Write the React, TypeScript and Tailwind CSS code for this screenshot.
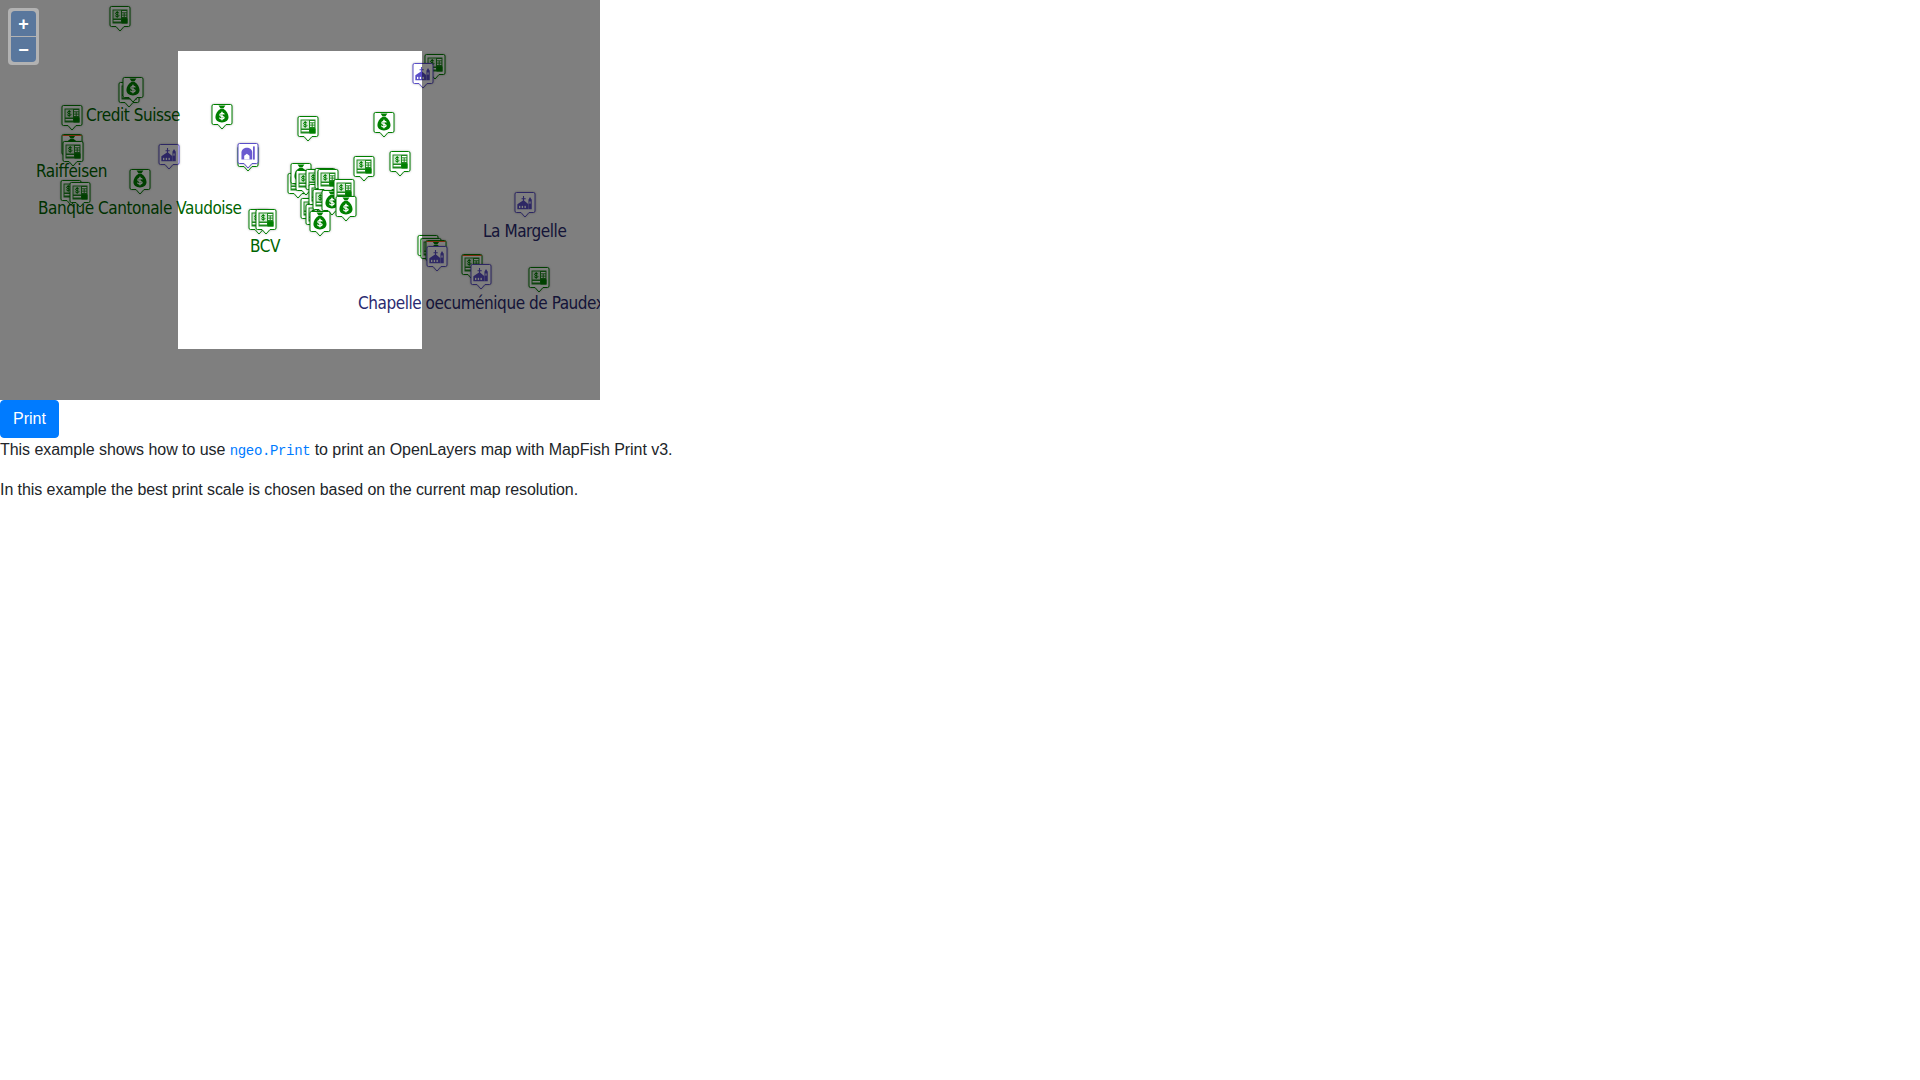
import React from "react";

type Kind = "atm" | "bag" | "church" | "chapel";
type Pin = { k: Kind; x: number; y: number; bar?: boolean };

const GREEN = "#008000";
const VIOLET = "#5a4ec8";

function Dollar({ x, y, s, c }: { x: number; y: number; s: number; c: string }) {
  return (
    <g transform={`translate(${x} ${y}) scale(${s})`} fill="none" stroke={c} strokeWidth={1} strokeLinecap="round">
      <path d="M1.6-1.6C1.2-2.3-1.7-2.4-1.7-.9c0 1.6 3.4.6 3.4 2.1C1.7 2.6-1.3 2.5-1.8 1.6" />
      <path d="M0-3V3" />
    </g>
  );
}

function Icon({ k }: { k: Kind }) {
  if (k === "atm")
    return (
      <g>
        <rect x="3" y="3.5" width="15" height="14" fill="#1f8a1f" />
        <rect x="4" y="4.5" width="7.5" height="8" fill="#d5ead5" />
        <Dollar x={7.7} y={8.4} s={1} c={GREEN} />
        <rect x="4" y="14" width="7.5" height="1.5" fill="#fff" />
        <rect x="12.5" y="5" width="4.5" height="1.3" fill="#fff" />
        <rect x="12.5" y="7.3" width="1.7" height="1.3" fill="#fff" />
        <rect x="15.2" y="7.3" width="1.7" height="1.3" fill="#fff" />
        <rect x="12.5" y="9.6" width="1.7" height="1.3" fill="#fff" />
        <rect x="15.2" y="9.6" width="1.7" height="1.3" fill="#fff" />
        <rect x="12" y="12.5" width="6" height="5" fill={GREEN} />
      </g>
    );
  if (k === "bag")
    return (
      <g transform="translate(-1.6 -1.3) scale(1.15)">
        <path d="M7.5 2.5h6l-1.8 2.6h-2.4z" fill={GREEN} />
        <path d="M9 5.5h3c2.4 1.6 4.2 4.4 4.2 7 0 3-2.4 4.7-5.7 4.7s-5.7-1.7-5.7-4.7c0-2.6 1.8-5.4 4.2-7z" fill={GREEN} />
        <Dollar x={10.5} y={11.6} s={1.1} c="#fff" />
      </g>
    );
  if (k === "church")
    return (
      <g fill={VIOLET} transform="translate(-1 -1) scale(1.1)">
        <path d="M8.6 4.5h1v2h1.5v1H9.6v1.2l4 3.3v4.5H3.5V12l5.1-3.4V7.5H7.3v-1h1.3z" />
        <path d="M15 5.5l1.6 2.5v8.5h-3V8z" />
        <rect x="5" y="13.5" width="1.2" height="2" fill="#fff" />
        <rect x="7.5" y="13.5" width="1.2" height="2" fill="#fff" />
        <rect x="10" y="13.5" width="1.2" height="2" fill="#fff" />
        <rect x="14.5" y="9.5" width="1" height="2" fill="#fff" />
      </g>
    );
  return (
    <g fill="#6a5ad0" transform="translate(-1 -1) scale(1.1)">
      <path d="M4.5 16V9.5C4.5 7 7 5.2 9.5 5.2s4.8 1.8 4.8 4.3V16z" />
      <rect x="15" y="4" width="1.6" height="12" />
      <path d="M7 16v-3.6l2.4-1.8 2.4 1.8V16z" fill="#fff" />
    </g>
  );
}

function Marker({ k, x, y, bar }: Pin) {
  const stroke = k === "church" || k === "chapel" ? VIOLET : GREEN;
  return (
    <svg
      className="absolute drop-shadow-[0_0_1px_rgba(0,0,0,0.3)]"
      style={{ left: x, top: y + 1 }}
      width={22}
      height={26}
      viewBox="0 0 21 26"
    >
      <path
        d="M2 .5h17a1.5 1.5 0 0 1 1.5 1.5v17a1.5 1.5 0 0 1-1.5 1.5h-4.5l-4 4.5-4-4.5H2A1.5 1.5 0 0 1 .5 19V2A1.5 1.5 0 0 1 2 .5z"
        fill="#fff"
        stroke={stroke}
      />
      <Icon k={k} />
      {bar && <rect x="1" y="1" width="19" height="1" fill="#ff5a1e" />}
    </svg>
  );
}

const pins: Pin[] = [
  { k: "atm", x: 109, y: 5 },
  { k: "atm", x: 118, y: 81 },
  { k: "bag", x: 122, y: 76 },
  { k: "atm", x: 61, y: 104 },
  { k: "bag", x: 61, y: 133, bar: true },
  { k: "atm", x: 62, y: 140 },
  { k: "church", x: 158, y: 143 },
  { k: "bag", x: 129, y: 168 },
  { k: "atm", x: 60, y: 179 },
  { k: "atm", x: 69, y: 181 },
  { k: "bag", x: 211, y: 103 },
  { k: "atm", x: 237, y: 145 },
  { k: "chapel", x: 237, y: 142 },
  { k: "atm", x: 248, y: 208 },
  { k: "atm", x: 255, y: 208 },
  { k: "atm", x: 297, y: 115 },
  { k: "bag", x: 373, y: 111 },
  { k: "atm", x: 353, y: 155 },
  { k: "atm", x: 389, y: 150 },
  { k: "atm", x: 424, y: 53 },
  { k: "church", x: 412, y: 62 },
  { k: "atm", x: 287, y: 172 },
  { k: "bag", x: 290, y: 162 },
  { k: "atm", x: 295, y: 169 },
  { k: "atm", x: 300, y: 197 },
  { k: "atm", x: 305, y: 203 },
  { k: "atm", x: 305, y: 168 },
  { k: "atm", x: 308, y: 183 },
  { k: "atm", x: 312, y: 188 },
  { k: "atm", x: 314, y: 167 },
  { k: "atm", x: 317, y: 168 },
  { k: "bag", x: 321, y: 189 },
  { k: "atm", x: 333, y: 178 },
  { k: "bag", x: 335, y: 195 },
  { k: "bag", x: 309, y: 210 },
  { k: "atm", x: 417, y: 234 },
  { k: "atm", x: 420, y: 237 },
  { k: "bag", x: 425, y: 239, bar: true },
  { k: "church", x: 426, y: 245 },
  { k: "atm", x: 461, y: 253, bar: true },
  { k: "church", x: 470, y: 263 },
  { k: "atm", x: 528, y: 266 },
  { k: "church", x: 514, y: 191 },
];

const labels: { t: string; x: number; y: number; c: string }[] = [
  { t: "Credit Suisse", x: 86, y: 105, c: "#006400" },
  { t: "Raiffeisen", x: 36, y: 161, c: "#006400" },
  { t: "Banque Cantonale Vaudoise", x: 38, y: 198, c: "#006400" },
  { t: "BCV", x: 250, y: 236, c: "#006400" },
  { t: "La Margelle", x: 483, y: 221, c: "#2a2a70" },
  { t: "Chapelle oecuménique de Paudex", x: 358, y: 293, c: "#2a2a70" },
];

export default function App() {
  return (
    <div className="font-['Liberation_Sans',sans-serif] text-base leading-6 text-[#212529]">
      <div className="relative h-[400px] w-[600px] overflow-hidden bg-white">
        {pins.map((p, i) => (
          <Marker key={i} {...p} />
        ))}
        {labels.map((l) => (
          <span
            key={l.t}
            className="absolute whitespace-nowrap font-['DejaVu_Sans_Condensed','DejaVu_Sans',sans-serif] text-[17px] leading-[20px] tracking-[-0.45px] [font-stretch:condensed]"
            style={{ left: l.x, top: l.y, color: l.c }}
          >
            {l.t}
          </span>
        ))}
        <div className="absolute left-[178px] top-[51px] h-[298px] w-[244px] shadow-[0_0_0_1000px_rgba(0,0,0,0.5)]" />
        <div className="absolute left-2 top-2 flex w-[31px] flex-col gap-px rounded bg-[rgba(255,255,255,0.4)] p-[3px]">
          <button className="flex h-[25px] w-[25px] items-center justify-center rounded-t-sm bg-[rgba(0,60,136,0.5)] text-[18px] font-bold leading-none text-white">
            +
          </button>
          <button className="flex h-[25px] w-[25px] items-center justify-center rounded-b-sm bg-[rgba(0,60,136,0.5)] text-[18px] font-bold leading-none text-white">
            −
          </button>
        </div>
      </div>
      <button className="block rounded border border-[#007bff] bg-[#007bff] px-3 py-1.5 text-base leading-6 text-white">
        Print
      </button>
      <p className="mb-4 tracking-[-0.05px]">
        This example shows how to use{" "}
        <code className="font-['Liberation_Mono',monospace] text-[14px] leading-none tracking-[-0.35px] text-[#007bff]">
          ngeo.Print
        </code>{" "}
        to print an OpenLayers map with MapFish Print v3.
      </p>
      <p className="mb-4 tracking-[-0.065px]">
        In this example the best print scale is chosen based on the current map resolution.
      </p>
    </div>
  );
}
